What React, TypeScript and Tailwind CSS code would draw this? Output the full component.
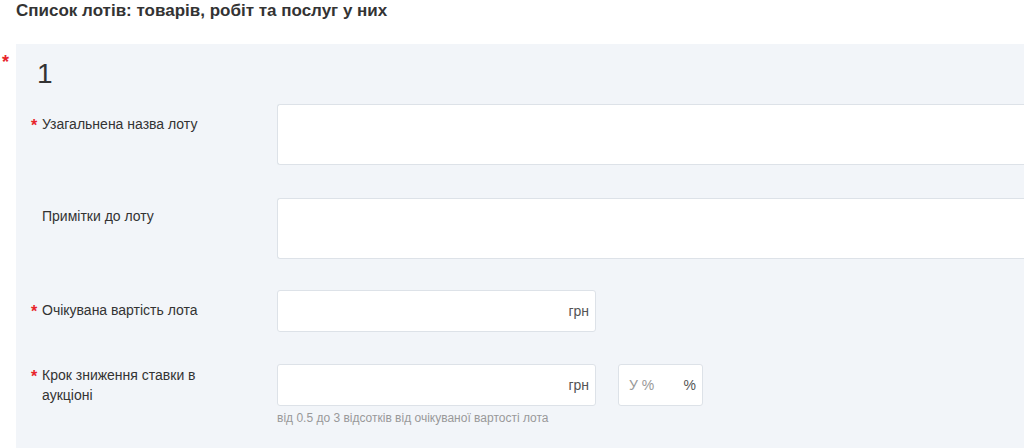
import React from "react";

type FieldLabelProps = {
  required?: boolean;
  children: React.ReactNode;
};

function FieldLabel({ required, children }: FieldLabelProps) {
  return (
    <div className="flex w-[261px] shrink-0 pl-[15px] text-[14px] leading-5 text-[#333]">
      <span className="w-[11px] shrink-0 pt-[2px] text-[16px] leading-5 font-bold text-[#e8242b]">
        {required ? "*" : ""}
      </span>
      <span className="w-[180px]">{children}</span>
    </div>
  );
}

function Suffix({ children }: { children: React.ReactNode }) {
  return <span className="text-[14px] text-[#555]">{children}</span>;
}

export default function App() {
  return (
    <div className="w-full h-[448px] overflow-hidden bg-white font-['Liberation_Sans',Arial,sans-serif]">
      <div className="w-[1200px]">
        <h2 className="pl-4 pt-px text-[17px] leading-5 font-bold text-[#333]">
          Список лотів: товарів, робіт та послуг у них
        </h2>

        <div className="relative mt-[23px] ml-4 bg-[#f2f5f9] pt-[14px] pb-10">
          <span className="absolute -left-[14px] top-[8px] text-[18px] leading-5 font-bold text-[#e8242b]">*</span>

          <div className="pl-[21px] text-[28px] leading-8 text-[#333]">1</div>

          <div className="mt-[14px] flex flex-col">
            <div className="flex items-start">
              <div className="pt-[10px]">
                <FieldLabel required>Узагальнена назва лоту</FieldLabel>
              </div>
              <div className="h-[61px] flex-1 rounded-l-[3px] border-y border-l border-[#dde2e8] bg-white" />
            </div>

            <div className="mt-[33px] flex items-start">
              <div className="pt-[8px]">
                <FieldLabel>Примітки до лоту</FieldLabel>
              </div>
              <div className="h-[61px] flex-1 rounded-l-[3px] border-y border-l border-[#dde2e8] bg-white" />
            </div>

            <div className="mt-[31px] flex items-center">
              <FieldLabel required>Очікувана вартість лота</FieldLabel>
              <div className="flex h-[42px] w-[319px] items-center justify-end rounded-[3px] border border-[#dde2e8] bg-white pr-[6px]">
                <Suffix>грн</Suffix>
              </div>
            </div>

            <div className="mt-[32px] flex items-start">
              <div className="flex h-[42px] items-center">
                <FieldLabel required>Крок зниження ставки в аукціоні</FieldLabel>
              </div>
              <div className="flex flex-col">
                <div className="flex gap-[22px]">
                  <div className="flex h-[42px] w-[319px] items-center justify-end rounded-[3px] border border-[#dde2e8] bg-white pr-[6px]">
                    <Suffix>грн</Suffix>
                  </div>
                  <div className="flex h-[42px] w-[85px] items-center justify-between rounded-[3px] border border-[#dde2e8] bg-white pl-[10px] pr-[6px]">
                    <span className="text-[14px] text-[#999]">У %</span>
                    <Suffix>%</Suffix>
                  </div>
                </div>
                <p className="mt-[4px] text-[12px] leading-4 text-[#999]">
                  від 0.5 до 3 відсотків від очікуваної вартості лота
                </p>
              </div>
            </div>
          </div>
        </div>
      </div>
    </div>
  );
}
